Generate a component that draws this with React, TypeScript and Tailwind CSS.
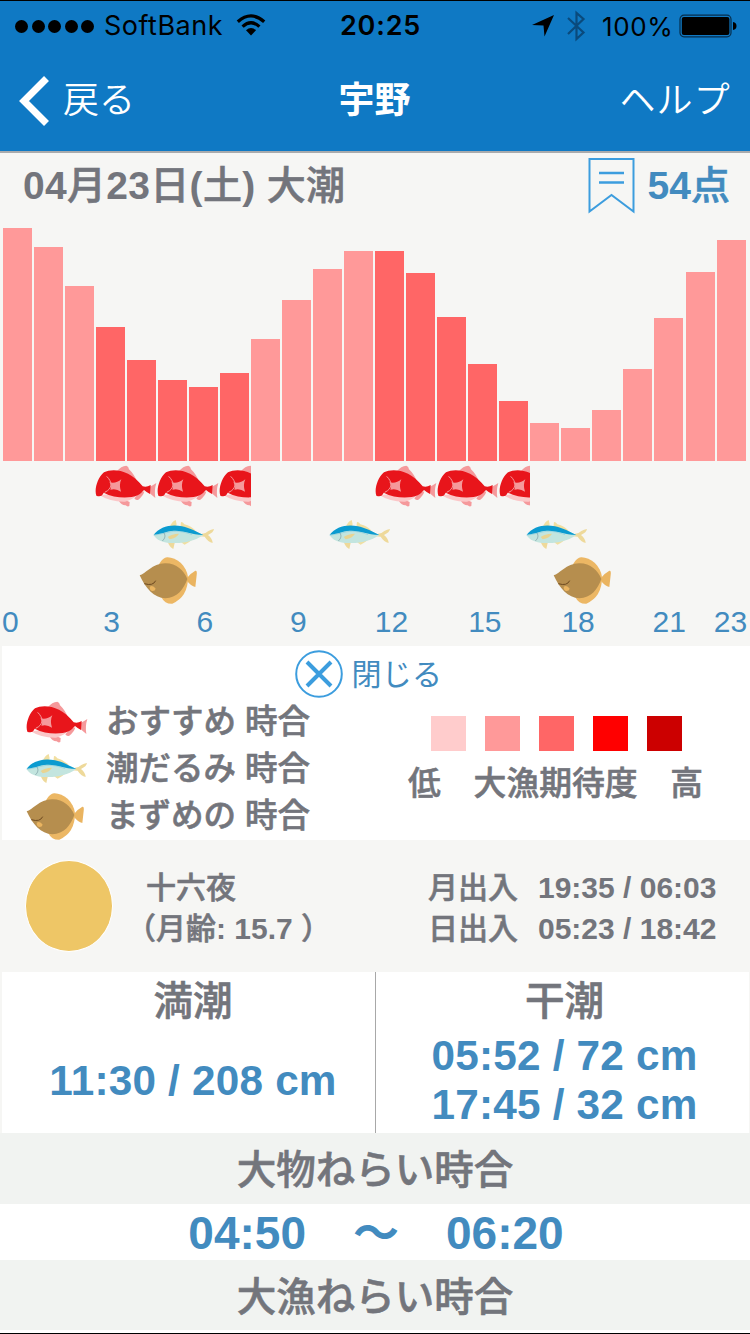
import type { ReactNode } from "react";

interface Bar {
  height: number;
  strong?: boolean;
}

const bars: Bar[] = [
  { height: 232.7 },
  { height: 214 },
  { height: 174.7 },
  { height: 134, strong: true },
  { height: 101.4, strong: true },
  { height: 81, strong: true },
  { height: 74, strong: true },
  { height: 88, strong: true },
  { height: 121.7 },
  { height: 160.7 },
  { height: 192.4 },
  { height: 209.7 },
  { height: 209.7, strong: true },
  { height: 187.7, strong: true },
  { height: 144.4, strong: true },
  { height: 97.4, strong: true },
  { height: 60.4, strong: true },
  { height: 38.4 },
  { height: 32.7 },
  { height: 51.4 },
  { height: 92.4 },
  { height: 143.4 },
  { height: 188.7 },
  { height: 221.4 },
];

const hours = ["3", "6", "9", "12", "15", "18"];

const levels = [
  "bg-[#ffcccc]",
  "bg-[#ff9999]",
  "bg-[#ff6666]",
  "bg-[#ff0000]",
  "bg-[#cc0000]",
];

// Semi-bold Japanese: medium weight with a thin stroke
function Jp({ children }: { children: ReactNode }) {
  return (
    <span className="font-medium [-webkit-text-stroke:0.6px_currentColor]">{children}</span>
  );
}

function SeaBream() {
  return (
    <svg viewBox="46 15 186 126" className="h-[42px] w-[62px] shrink-0">
      <path d="M112 33 Q124 18 140 17 Q147 19 148 28 Q163 42 174 68 Z" fill="#f5999b" />
      <path d="M118 124 Q130 115 150 126 L149 138 Q143 141 138 136 Q127 137 118 124Z" fill="#f5999b" />
      <path d="M164 115 Q178 98 194 94 Q192 107 176 119 Q168 122 164 115Z" fill="#f5999b" />
      <path d="M60 106 Q92 126 136 125 Q168 116 182 92 Z" fill="#fbc7c8" />
      <path d="M206 83 Q218 77 230 69 Q223 91 227 114 Q216 104 204 95 Z" fill="#f5999b" />
      <path
        d="M50 107 C43 89 54 52 73 37 C100 24 150 29 189 79 Q201 83 213 75 L211 102 Q201 97 193 90 Q178 109 156 111 C130 114 98 112 72 98 Q66 113 50 107Z"
        fill="#e8151b"
      />
      <path d="M81 49 C98 65 100 86 75 97" fill="none" stroke="#f5999b" strokeWidth="3" />
      <path
        d="M89 67 Q109 72 125 58 Q117 75 124 95 Q109 84 92 89 Q98 77 89 67Z"
        fill="#f5999b"
      />
    </svg>
  );
}

function Mackerel() {
  return (
    <svg viewBox="219 177 186 93" className="h-[31px] w-[62px] shrink-0">
      <path d="M268 203 Q276 184 287 180 Q292 191 288 203Z" fill="#f1dfa1" />
      <path d="M301 202 L303 186 Q309 186 313 193 Q334 198 348 214Z" fill="#f1dfa1" />
      <path
        d="M364 222 Q376 222 385 213 Q393 208 402 207 Q401 217 384 225 Q397 235 398 249 Q384 246 374 230 Q368 229 360 229Z"
        fill="#eed99a"
      />
      <path d="M263 246 L284 249 L280 267 Q270 263 263 246Z" fill="#eed99a" />
      <path d="M303 247 L340 236 Q325 249 314 254Z" fill="#f1dfa1" />
      <path
        d="M221 225 C250 196 305 192 370 225 C345 242 318 249 287 249 C252 251 229 241 221 225Z"
        fill="#c3e5df"
      />
      <path
        d="M221 224 C239 200 274 191 306 199 C331 204 350 216 370 225 C332 224 314 211 282 212 C256 214 243 223 221 224Z"
        fill="#0b9bd0"
      />
      <path d="M221 226 Q245 222 261 218 C286 210 311 215 336 224" fill="none" stroke="#7fc8df" strokeWidth="1.5" />
      <path d="M252 219 Q260 231 247 243" fill="none" stroke="#7c9ca3" strokeWidth="2" />
      <path d="M263 231 Q275 222 297 221 Q291 233 269 238 Z" fill="#e8d492" />
    </svg>
  );
}

function Flounder() {
  return (
    <svg viewBox="178 288 176 144" className="h-[48px] w-[58.7px] shrink-0">
      <path
        d="M240 310 Q250 293 262 292 C289 291 321 316 325 352 Q325 411 278 431 Q255 432 246 413Z"
        fill="#ecb764"
      />
      <path d="M320 356 Q333 339 347 332 Q353 331 351 345 L347 381 Q334 379 320 360Z" fill="#eab460" />
      <path
        d="M180 346 C196 343 218 310 256 310 C289 309 313 331 323 357 C312 388 292 414 257 415 C223 414 197 384 180 346Z"
        fill="#b68e4e"
      />
      <path d="M194 371 Q220 379 228 362" fill="none" stroke="#6e4a20" strokeWidth="3" />
      <path d="M210 380 Q220 374 228 386 Q226 394 217 393 Q210 391 210 380Z" fill="#eab460" />
    </svg>
  );
}

function StatusBar() {
  return (
    <div className="flex h-[50px] items-center pl-[15px] font-['Inter',sans-serif] text-[26px] text-black">
      <div className="flex gap-[3.5px]">
        {[0, 1, 2, 3, 4].map((i) => (
          <span key={i} className="size-[13px] rounded-full bg-black" />
        ))}
      </div>
      <span className="ml-[10px] w-[132px] text-[27px] tracking-[0.5px]">SoftBank</span>
      <svg viewBox="0 0 30 22" className="mb-[2px] h-[22px] w-[30px]" fill="none" stroke="#000">
        <path d="M1.8 7.8 Q15 -4 28.2 7.8" strokeWidth="3.3" />
        <path d="M6.6 12.6 Q15 5 23.4 12.6" strokeWidth="3.3" />
        <path d="M10 16.2 Q15 12 20 16.2 L15 21.4Z" fill="#000" stroke="none" />
      </svg>
      <span className="ml-[74px] w-[192px] text-[27px] font-semibold tracking-[0.8px]">20:25</span>
      <svg viewBox="0 0 22 22" className="h-[22px] w-[22px]">
        <path d="M22 0 L0 10 L11.5 10.5 L12.5 21.5Z" fill="#000" />
      </svg>
      <svg viewBox="0 0 20 32" className="ml-[12px] h-[32px] w-[20px]" fill="none" stroke="#0a4a7c" strokeWidth="2.2">
        <path d="M2 8 L17.5 22.5 L10.5 29 L10.5 3 L17.5 9 L2 24" />
      </svg>
      <span className="ml-[16px] w-[77px] tracking-[0.6px]">100%</span>
      <svg viewBox="0 0 58 24" className="h-[24px] w-[58px]">
        <rect x="1" y="1.2" width="51" height="21.6" rx="4" fill="none" stroke="#062d4b" strokeWidth="1.2" />
        <rect x="2.8" y="3" width="47.6" height="18" rx="2" fill="#000" />
        <path d="M54 8 Q57.5 8.5 57.5 12 Q57.5 15.5 54 16Z" fill="#000" />
      </svg>
    </div>
  );
}

function NavBar() {
  return (
    <div className="flex h-[100px] items-center text-[36px] leading-[50px] text-white">
      <div className="flex w-[300px] items-center pl-[18px]">
        <svg viewBox="0 0 32 50" className="h-[50px] w-[32px]" fill="none" stroke="#fff" strokeWidth="7">
          <path d="M28.5 2.5 L6 25 L28.5 47.5" />
        </svg>
        <span className="ml-[13px] font-[350]">戻る</span>
      </div>
      <h1 className="w-[149px] text-center font-bold">宇野</h1>
      <span className="w-[301px] pr-[19px] text-right font-[350] tracking-[1.2px]">ヘルプ</span>
    </div>
  );
}

function LegendRow({ icon, label }: { icon: ReactNode; label: string }) {
  return (
    <div className="flex h-[47px] items-center">
      <div className="flex w-[80px] items-center pb-[2px]">{icon}</div>
      <span className="whitespace-nowrap">
        <Jp>{label}</Jp>
      </span>
    </div>
  );
}

function TideChart() {
  return (
    <section>
      <div className="flex h-[242px] items-end gap-[2.05px] pl-[2.5px]">
        {bars.map((bar, i) => (
          <div
            key={i}
            className={`w-[29px] shrink-0 ${bar.strong ? "bg-[#ff6666]" : "bg-[#ff9999]"}`}
            style={{ height: bar.height }}
          />
        ))}
      </div>

      <div className="flex h-[54px] items-start gap-[124px] pt-[4px] pl-[95.3px]">
        {[0, 1].map((i) => (
          <div key={i} className="flex w-[155.5px] overflow-hidden">
            <SeaBream />
            <SeaBream />
            <SeaBream />
          </div>
        ))}
      </div>
      <div className="flex h-[41px] items-start pt-[4px] pl-[153px]">
        <Mackerel />
        <div className="ml-[114px] flex">
          <Mackerel />
        </div>
        <div className="ml-[135px] flex">
          <Mackerel />
        </div>
      </div>
      <div className="flex h-[49px] items-start gap-[355px] pl-[139.3px]">
        <Flounder />
        <Flounder />
      </div>

      <div className="flex h-[41px] text-[30px] leading-[33px] text-[#428bbf]">
        <span className="w-[65px] pl-[2px]">0</span>
        {hours.map((hour) => (
          <span key={hour} className="w-[93.3px] text-center">
            {hour}
          </span>
        ))}
        <span className="w-[89px] text-center">21</span>
        <span className="w-[33px] text-center">23</span>
      </div>
    </section>
  );
}

export default function App() {
  return (
    <div className="h-[1334px] w-[750px] overflow-hidden border-y border-black bg-[#f6f6f4] font-['Liberation_Sans','Noto_Sans_CJK_JP',sans-serif] text-[#73757c]">
      <header className="h-[152px] border-b-2 border-[#a9abad] bg-[#0f79c4]">
        <StatusBar />
        <NavBar />
      </header>

      <div className="flex h-[66px] items-center text-[39px] leading-[66px] font-bold">
        <span className="flex-1 pl-[23px] tracking-[0.3px] whitespace-nowrap">
          04<Jp>月</Jp>23<Jp>日</Jp>(<Jp>土</Jp>) <Jp>大潮</Jp>
        </span>
        <svg viewBox="0 0 48 58" className="mr-[13px] h-[58px] w-[48px]" fill="none" stroke="#3c9dde" strokeWidth="2">
          <path d="M2.5 2 H46.5 V54.5 L24.5 38 L2.5 54.5Z" />
          <path d="M12 16 H37 M12 25.5 H37" strokeWidth="2.5" />
        </svg>
        <span className="pr-[20px] text-[#428bbf]">
          54<Jp>点</Jp>
        </span>
      </div>

      <TideChart />

      <section className="ml-[2px] h-[194px] bg-white">
        <div className="flex h-[53px] items-center pt-[2px] pl-[292.5px] text-[30px] text-[#428bbf]">
          <svg viewBox="0 0 48 48" className="h-[48px] w-[48px]" fill="none" stroke="#3c9dde">
            <circle cx="24" cy="24" r="22.8" strokeWidth="2" />
            <path d="M12 12 L36 36 M36 12 L12 36" strokeWidth="4" />
          </svg>
          <span className="mt-[1px] ml-[9px] tracking-[0.2px]">閉じる</span>
        </div>
        <div className="flex text-[32.5px] leading-[47px]">
          <div className="w-[404px] pl-[24px]">
            <LegendRow icon={<SeaBream />} label="おすすめ 時合" />
            <LegendRow icon={<Mackerel />} label="潮だるみ 時合" />
            <LegendRow icon={<Flounder />} label="まずめの 時合" />
          </div>
          <div className="pt-[17px]">
            <div className="flex gap-[19px] pl-[25px]">
              {levels.map((level) => (
                <span key={level} className={`size-[35px] ${level}`} />
              ))}
            </div>
            <p className="mt-[9px] pl-[2px] text-[32.8px] whitespace-nowrap">
              <Jp>低　大漁期待度　高</Jp>
            </p>
          </div>
        </div>
      </section>

      <section className="flex h-[132px] pt-[20px] text-[30px] leading-[41px] font-bold">
        <div className="ml-[24.5px] h-[92px] w-[88.5px] rounded-[50%] border border-white bg-[#eec666]" />
        <div className="mt-[7px] ml-[13px] w-[302px] whitespace-pre">
          <p className="pl-[20px]">
            <Jp>十六夜</Jp>
          </p>
          <p>
            <Jp>（月齢</Jp>: 15.7 <Jp>）</Jp>
          </p>
        </div>
        <div className="mt-[7px] flex gap-[20px]">
          <div>
            <p>
              <Jp>月出入</Jp>
            </p>
            <p>
              <Jp>日出入</Jp>
            </p>
          </div>
          <div>
            <p>19:35 / 06:03</p>
            <p>05:23 / 18:42</p>
          </div>
        </div>
      </section>

      <section className="mr-px ml-[2px] flex h-[161px] bg-white text-center text-[42.3px] leading-[49px] font-bold text-[#428bbf]">
        <div className="w-[373px] pl-[9px]">
          <h2 className="h-[59px] text-[39.5px] leading-[59px] text-[#73757c]">
            <Jp>満潮</Jp>
          </h2>
          <p className="leading-[99px] tracking-[0.2px]">11:30 / 208 cm</p>
        </div>
        <div className="flex-1 border-l border-[#a8a8a8] pl-[4px]">
          <h2 className="h-[59px] text-[39.5px] leading-[59px] text-[#73757c]">
            <Jp>干潮</Jp>
          </h2>
          <p className="tracking-[0.2px]">05:52 / 72 cm</p>
          <p className="tracking-[0.2px]">17:45 / 32 cm</p>
        </div>
      </section>

      <h2 className="h-[71px] bg-[#f1f3f1] text-center text-[39.5px] leading-[74px]">
        <Jp>大物ねらい時合</Jp>
      </h2>
      <div className="flex h-[56px] items-center justify-center bg-white pt-[2px] pl-[2px] text-[46px] leading-[56px] font-bold text-[#428bbf]">
        <span>04:50</span>
        <span className="mx-[47px]">〜</span>
        <span>06:20</span>
      </div>
      <h2 className="h-[70px] bg-[#f1f3f1] text-center text-[39.5px] leading-[74px]">
        <Jp>大漁ねらい時合</Jp>
      </h2>
      <div className="h-[3px] bg-white" />
    </div>
  );
}
